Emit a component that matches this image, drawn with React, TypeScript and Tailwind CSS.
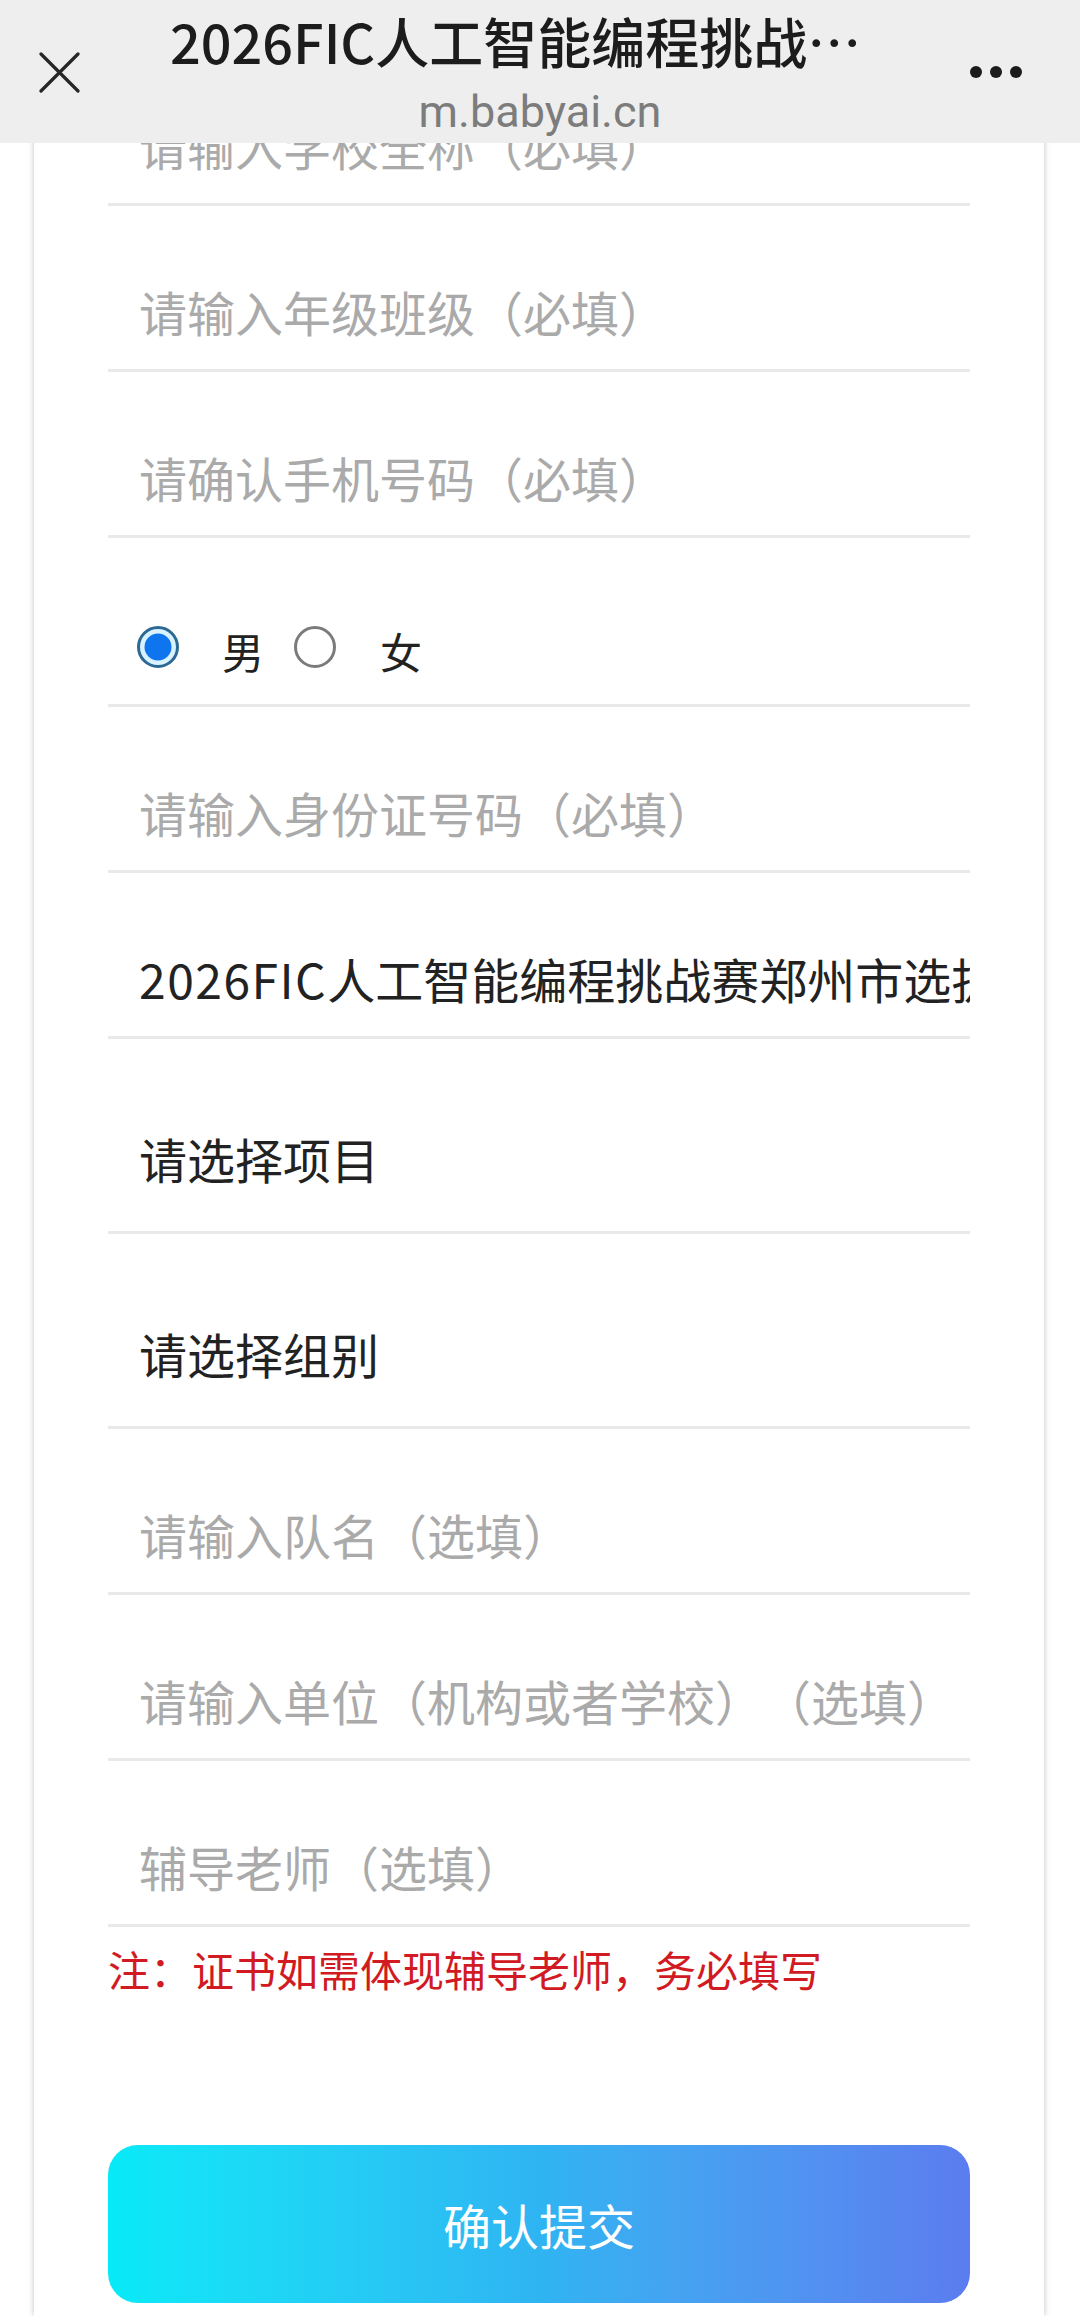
const cjk = { fontFamily: '"Noto Sans CJK SC", "Noto Sans", sans-serif' };

type Row = { text: string; latin?: string; filled?: boolean; select?: boolean };

const rowsTop: Row[] = [
  { text: "请输入学校全称（必填）" },
  { text: "请输入年级班级（必填）" },
  { text: "请确认手机号码（必填）" },
];

const rowsBottom: Row[] = [
  { text: "请输入身份证号码（必填）" },
  { latin: "2026FIC", text: "人工智能编程挑战赛郑州市选拔赛", filled: true },
  { text: "请选择项目", filled: true, select: true },
  { text: "请选择组别", filled: true, select: true },
  { text: "请输入队名（选填）" },
  { text: "请输入单位（机构或者学校）（选填）" },
  { text: "辅导老师（选填）" },
];

function FieldRow({ row }: { row: Row }) {
  return (
    <div
      className={`flex items-end overflow-hidden border-b-[3px] border-[#e9e9e9] pl-[31px] ${
        row.select ? "h-[195px] pb-[43px]" : "h-[166px] pb-[28px]"
      }`}
    >
      <span
        className={`whitespace-nowrap text-[48px] leading-[60px] ${
          row.filled ? "text-[#222222]" : "text-[#aaaaaa]"
        }`}
      >
        {row.latin && <span className="tracking-[1.5px]">{row.latin}</span>}
        {row.text}
      </span>
    </div>
  );
}

function Radio({ checked }: { checked?: boolean }) {
  return (
    <svg width="42" height="42" viewBox="0 0 42 42" className="shrink-0">
      {checked ? (
        <>
          <circle cx="21" cy="21" r="19.5" fill="#d9f2ff" stroke="#2c6994" strokeWidth="3" />
          <circle cx="21" cy="21" r="13.5" fill="#0e75ee" />
        </>
      ) : (
        <circle cx="21" cy="21" r="19.5" fill="#ffffff" stroke="#7b7b7b" strokeWidth="3" />
      )}
    </svg>
  );
}

export default function App() {
  return (
    <div
      className="relative h-[2316px] w-[1080px] overflow-hidden bg-white [text-spacing-trim:space-all]"
      style={cjk}
    >
      <header className="fixed left-0 top-0 z-10 flex h-[143px] w-[1080px] bg-[#eeeeee]">
        <div className="w-[170px] pl-[39px] pt-[52px]">
          <svg width="41" height="41" viewBox="0 0 41 41">
            <path d="M2 2 L39 39 M39 2 L2 39" stroke="#262626" strokeWidth="3.2" strokeLinecap="round" />
          </svg>
        </div>
        <div className="flex w-[740px] flex-col pt-[10px]">
          <div className="truncate text-[54px] font-medium leading-[62px] text-[#1c1c1c]">
            2026FIC人工智能编程挑战赛郑州市选拔赛报名
          </div>
          <div
            className="mt-[14px] text-center text-[45px] leading-[52px] text-[#7c7c7c]"
            style={{ fontFamily: "Roboto, sans-serif" }}
          >
            m.babyai.cn
          </div>
        </div>
        <div className="flex flex-1 gap-[8px] pl-[60px] pt-[66px]">
          <span className="h-[12px] w-[12px] rounded-full bg-[#1c1c1c]" />
          <span className="h-[12px] w-[12px] rounded-full bg-[#1c1c1c]" />
          <span className="h-[12px] w-[12px] rounded-full bg-[#1c1c1c]" />
        </div>
      </header>

      <main className="ml-[34px] h-[2316px] w-[1010px] bg-white px-[74px] pt-[40px] shadow-[0_0_6px_rgba(0,0,0,0.25)]">
        {rowsTop.map((r) => (
          <FieldRow key={r.text} row={r} />
        ))}

        <div className="flex h-[169px] items-end border-b-[3px] border-[#e9e9e9] pb-[36px] pl-[29px]">
          <Radio checked />
          <span className="ml-[43px] text-[42px] leading-[34px] text-[#222222]">男</span>
          <span className="ml-[30px]">
            <Radio />
          </span>
          <span className="ml-[44px] text-[42px] leading-[34px] text-[#222222]">女</span>
        </div>

        {rowsBottom.map((r) => (
          <FieldRow key={r.text} row={r} />
        ))}

        <p className="mt-[14px] text-[42px] leading-[56px] text-[#d11a22]">
          注：证书如需体现辅导老师，务必填写
        </p>

        <button className="mt-[148px] flex h-[158px] w-full items-center justify-center rounded-[30px] bg-gradient-to-r from-[#07eaf7] via-[#2fb4f2] to-[#5b7cef] text-[48px] text-white">
          确认提交
        </button>
      </main>
    </div>
  );
}
